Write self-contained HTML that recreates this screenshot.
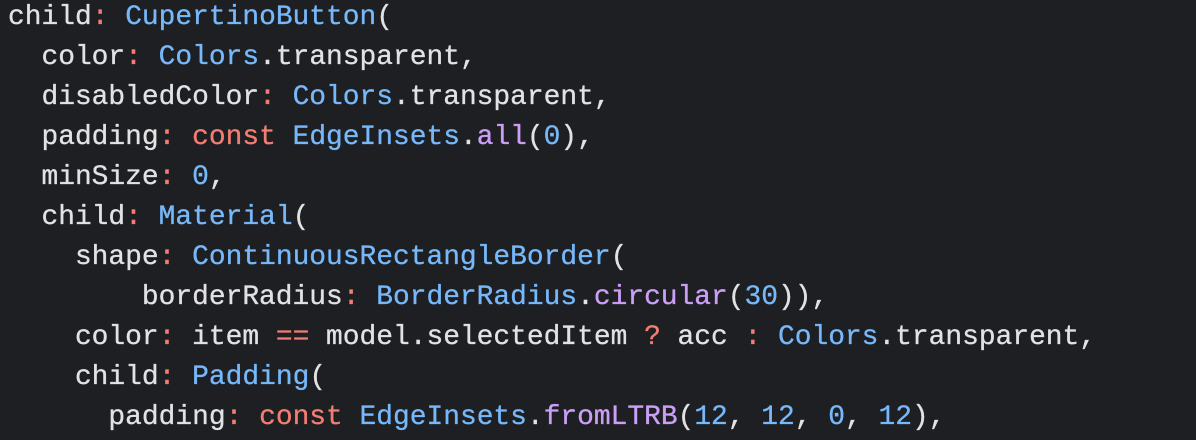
<!DOCTYPE html>
<html><head><style>
html,body{margin:0;padding:0;background:#1e1f23;width:1196px;height:440px;overflow:hidden}
pre{margin:0;position:absolute;left:8px;top:-2px;font-family:"Liberation Mono",monospace;font-size:27.9px;line-height:40px;color:#e2e2e4;-webkit-text-stroke:0.3px currentColor}
.b{color:#76b8fa}.r{color:#f27d72}.p{color:#cc9ff7}
</style></head><body><pre>child<span class="r">:</span> <span class="b">CupertinoButton</span>(
  color<span class="r">:</span> <span class="b">Colors</span>.transparent,
  disabledColor<span class="r">:</span> <span class="b">Colors</span>.transparent,
  padding<span class="r">:</span> <span class="r">const</span> <span class="b">EdgeInsets</span>.<span class="p">all</span>(<span class="b">0</span>),
  minSize<span class="r">:</span> <span class="b">0</span>,
  child<span class="r">:</span> <span class="b">Material</span>(
    shape<span class="r">:</span> <span class="b">ContinuousRectangleBorder</span>(
        borderRadius<span class="r">:</span> <span class="b">BorderRadius</span>.<span class="p">circular</span>(<span class="b">30</span>)),
    color<span class="r">:</span> item <span class="r">==</span> model.selectedItem <span class="r">?</span> acc <span class="r">:</span> <span class="b">Colors</span>.transparent,
    child<span class="r">:</span> <span class="b">Padding</span>(
      padding<span class="r">:</span> <span class="r">const</span> <span class="b">EdgeInsets</span>.<span class="p">fromLTRB</span>(<span class="b">12</span>, <span class="b">12</span>, <span class="b">0</span>, <span class="b">12</span>),
</pre></body></html>
